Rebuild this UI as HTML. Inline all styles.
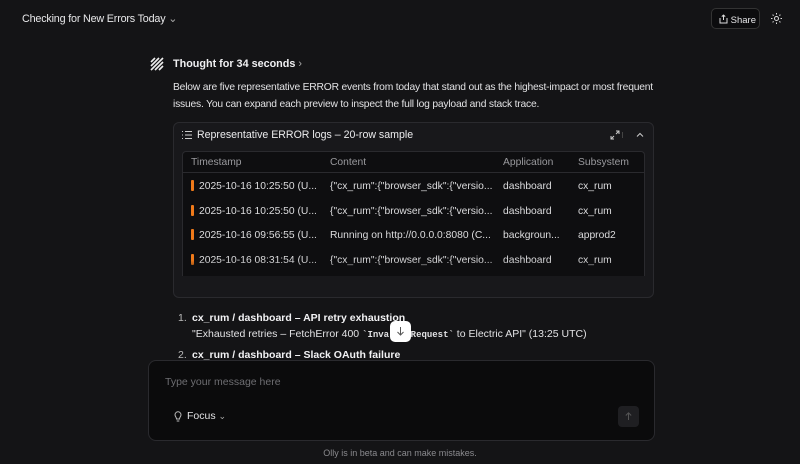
<!DOCTYPE html>
<html><head><style>
*{margin:0;padding:0;box-sizing:border-box}
body{width:800px;height:464px;background:#141416;font-family:"Liberation Sans",sans-serif;color:#e6e6e8;position:relative;overflow:hidden;font-size:11px}
.a{position:absolute;white-space:nowrap}
.card{position:absolute;left:173px;top:122px;width:481px;height:176px;border:1px solid #2a2a2e;border-radius:6px;background:#18181b}
.tbl{position:absolute;left:182px;top:151px;width:463px;height:125px;border:1px solid #2a2a2e;border-bottom:none;border-radius:4px 4px 0 0;background:#0e0e10;overflow:hidden}
.row{position:absolute;left:0;width:100%;height:24px;font-size:10.3px;color:#dcdcde}
.row span{position:absolute;top:6px}
.bar{position:absolute;left:8px;top:5px;width:3px;height:11px;background:#f07a1a;border-radius:1px}
</style></head><body>
<div class="a" style="left:22px;top:12px;font-size:10.8px;color:#e8e8ea;letter-spacing:-0.2px">Checking for New Errors Today <span style="color:#aaa">&#8964;</span></div>
<div class="a" style="left:711px;top:8px;width:49px;height:21px;border:1px solid #333;border-radius:5px;background:#0c0c0e;font-size:9.5px;padding:5px 0 0 7px">
<svg width="9" height="10" viewBox="0 0 9 10" style="vertical-align:-1px"><path d="M1 4v5h7V4M4.5 1v5M2.8 2.6L4.5 1l1.7 1.6" fill="none" stroke="#ddd" stroke-width="1"/></svg> Share</div>
<svg class="a" style="left:771px;top:13px" width="11" height="11" viewBox="0 0 11 11"><circle cx="5.5" cy="5.5" r="2" fill="none" stroke="#ddd"/><path d="M5.5 0v1.5M5.5 9.5V11M0 5.5h1.5M9.5 5.5H11M1.6 1.6l1 1M8.4 8.4l1 1M1.6 9.4l1-1M8.4 2.6l1-1" stroke="#ddd"/></svg>

<svg class="a" style="left:150px;top:57px" width="14" height="14" viewBox="0 0 14 14"><path d="M1 5L5 1M1 9L9 1M1 13L13 1M5 13L13 5M9 13L13 9" stroke="#eee" stroke-width="1.6"/></svg>
<div class="a" style="left:173px;top:58px;font-size:10.8px;font-weight:bold;color:#f0f0f2">Thought for 34 seconds <span style="font-weight:normal;color:#aaa">›</span></div>
<div class="a" style="left:173px;top:79px;font-size:10.3px;line-height:17px;color:#e2e2e4;white-space:normal;width:500px;letter-spacing:-0.2px">Below are five representative ERROR events from today that stand out as the highest-impact or most frequent issues. You can expand each preview to inspect the full log payload and stack trace.</div>

<div class="card">
<svg class="a" style="left:8px;top:8px" width="10" height="8" viewBox="0 0 10 8"><path d="M0 .5h1M3 .5h7M0 4h1M3 4h7M0 7.5h1M3 7.5h7" stroke="#ccc"/></svg>
<div class="a" style="left:23px;top:6px;font-size:10.6px;color:#ececee">Representative ERROR logs – 20-row sample</div>
<svg class="a" style="left:436px;top:7px" width="10" height="10" viewBox="0 0 10 10"><path d="M6 1h3v3M9 1L6 4M4 9H1V6M1 9l3-3" fill="none" stroke="#ccc"/></svg>
<div class="a" style="left:448px;top:9px;width:1px;height:6px;background:#444"></div>
<svg class="a" style="left:462px;top:9px" width="8" height="5" viewBox="0 0 8 5"><path d="M1 4.5L4 1.5 7 4.5" fill="none" stroke="#ccc"/></svg>
</div>
<div class="tbl">
<div class="row" style="top:0;height:21px;border-bottom:1px solid #2a2a2e;color:#9a9a9e"><span style="left:8px;top:5px">Timestamp</span><span style="left:147px;top:5px">Content</span><span style="left:320px;top:5px">Application</span><span style="left:395px;top:5px">Subsystem</span></div>
<div class="row" style="top:23px"><i class="bar"></i><span style="left:16px">2025-10-16 10:25:50 (U...</span><span style="left:147px">{"cx_rum":{"browser_sdk":{"versio...</span><span style="left:320px">dashboard</span><span style="left:395px">cx_rum</span></div>
<div class="row" style="top:47.5px"><i class="bar"></i><span style="left:16px">2025-10-16 10:25:50 (U...</span><span style="left:147px">{"cx_rum":{"browser_sdk":{"versio...</span><span style="left:320px">dashboard</span><span style="left:395px">cx_rum</span></div>
<div class="row" style="top:72px"><i class="bar"></i><span style="left:16px">2025-10-16 09:56:55 (U...</span><span style="left:147px">Running on http://0.0.0.0:8080 (C...</span><span style="left:320px">backgroun...</span><span style="left:395px">approd2</span></div>
<div class="row" style="top:96.5px"><i class="bar"></i><span style="left:16px">2025-10-16 08:31:54 (U...</span><span style="left:147px">{"cx_rum":{"browser_sdk":{"versio...</span><span style="left:320px">dashboard</span><span style="left:395px">cx_rum</span></div>
<div style="position:absolute;left:0;top:108px;width:100%;height:17px;background:linear-gradient(rgba(14,14,16,0),#0e0e10)"></div>
</div>

<div class="a" style="left:178px;top:312px;font-size:10.5px;color:#bbb">1.</div>
<div class="a" style="left:192px;top:312px;font-size:10.5px;font-weight:bold;color:#f2f2f4">cx_rum / dashboard – API retry exhaustion</div>
<div class="a" style="left:192px;top:328px;font-size:10.5px;color:#e2e2e4">"Exhausted retries – FetchError 400 <b style="font-family:'Liberation Mono',monospace;font-size:9px">`Invalid Request`</b> to Electric API" (13:25 UTC)</div>
<div class="a" style="left:390px;top:321px;width:21px;height:21px;background:#fff;border-radius:5px"><svg width="21" height="21" viewBox="0 0 21 21"><path d="M10.5 6v8M7.5 11l3 3 3-3" fill="none" stroke="#555"/></svg></div>
<div class="a" style="left:178px;top:349px;font-size:10.5px;color:#bbb">2.</div>
<div class="a" style="left:192px;top:349px;font-size:10.5px;font-weight:bold;color:#f2f2f4">cx_rum / dashboard – Slack OAuth failure</div>

<div class="a" style="left:148px;top:360px;width:507px;height:81px;background:#0b0b0c;border:1px solid #2a2a2e;border-radius:8px">
<div class="a" style="left:16px;top:15px;font-size:10.5px;color:#6e6e72">Type your message here</div>
<svg class="a" style="left:25px;top:50px" width="8" height="11" viewBox="0 0 8 11"><path d="M2.5 8C2.5 6 1 5.5 1 3.8a3 3 0 016 0C7 5.5 5.5 6 5.5 8zM2.7 10h2.6" fill="none" stroke="#bbb"/></svg>
<div class="a" style="left:38px;top:49px;font-size:10.5px;color:#e2e2e4">Focus <span style="color:#aaa;font-size:9px">&#8964;</span></div>
<div class="a" style="left:469px;top:45px;width:21px;height:21px;background:#1f1f22;border-radius:4px"><svg width="21" height="21" viewBox="0 0 21 21"><path d="M10.5 14V7M7.8 9.5l2.7-2.7 2.7 2.7" fill="none" stroke="#555"/></svg></div>
</div>
<div class="a" style="left:0;width:800px;text-align:center;top:448px;font-size:9px;color:#8a8a8e">Olly is in beta and can make mistakes.</div>
</body></html>
